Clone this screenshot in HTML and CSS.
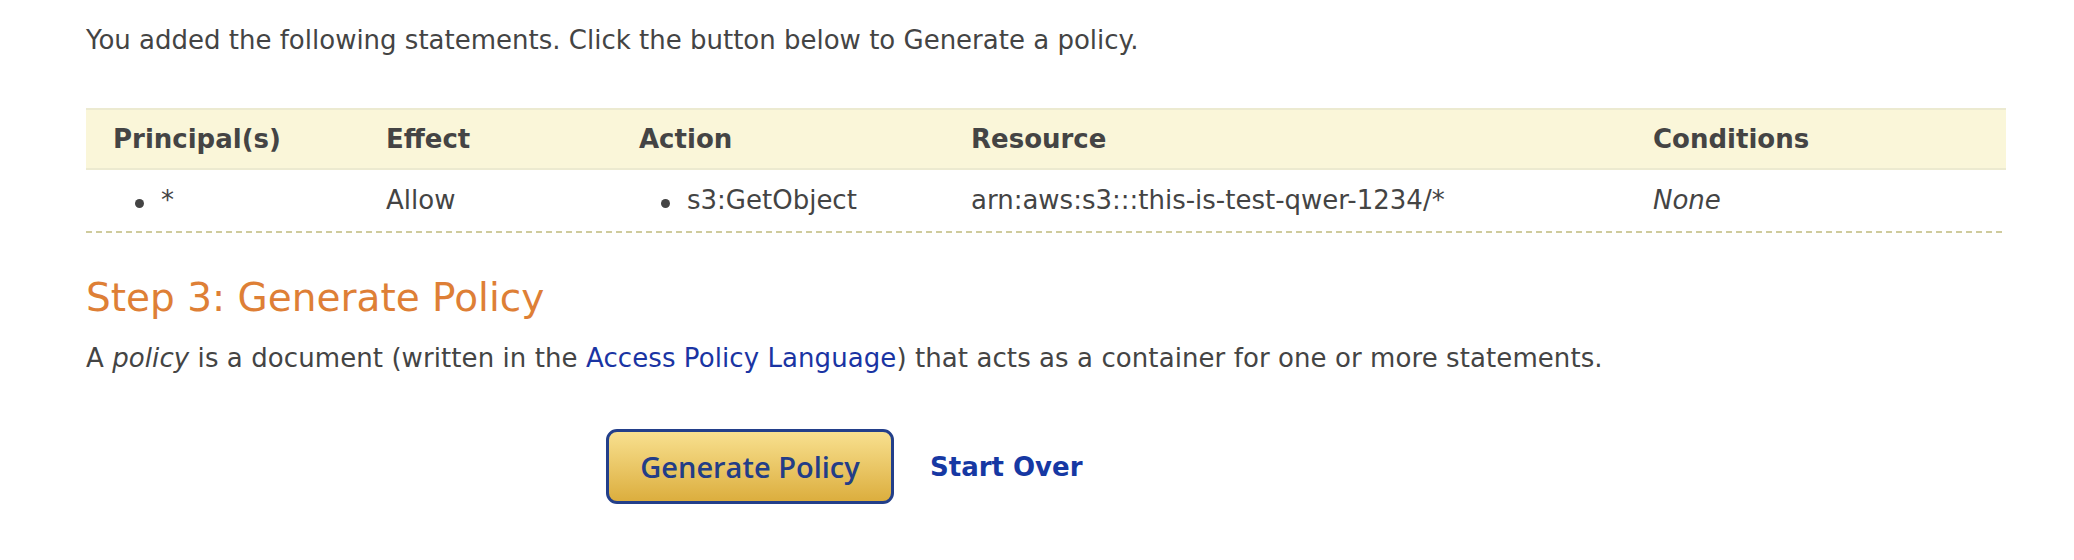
FILE: index.html
```html
<!DOCTYPE html>
<html>
<head>
<meta charset="utf-8">
<link rel="stylesheet" href="styles.css">
</head>
<body>
<div class="page">
  <p class="intro">You added the following statements. Click the button below to Generate a policy.</p>
  <table class="stmts">
    <colgroup>
      <col class="c1"><col class="c2"><col class="c3"><col class="c4"><col class="c5">
    </colgroup>
    <thead>
      <tr><th>Principal(s)</th><th>Effect</th><th>Action</th><th>Resource</th><th>Conditions</th></tr>
    </thead>
    <tbody>
      <tr>
        <td><ul class="blist"><li>*</li></ul></td>
        <td>Allow</td>
        <td><ul class="blist"><li>s3:GetObject</li></ul></td>
        <td>arn:aws:s3:::this-is-test-qwer-1234/*</td>
        <td><em>None</em></td>
      </tr>
    </tbody>
  </table>
  <div class="dash"></div>
  <h2 class="step">Step 3: Generate Policy</h2>
  <p class="desc">A <em>policy</em> is a document (written in the <a href="#">Access Policy Language</a>) that acts as a container for one or more statements.</p>
  <div class="actions">
    <button class="gen">Generate Policy</button>
    <a href="#" class="over">Start Over</a>
  </div>
</div>
</body>
</html>
```
FILE: styles.css
```css
html, body { margin: 0; padding: 0; background: #fff; }
body {
  font-family: "DejaVu Sans", Verdana, sans-serif;
  font-size: 26px;
  line-height: 30px;
  color: #444;
}
.page { padding: 25px 68px 0 86px; }
.intro { margin: 0 0 53px 0; }
.stmts {
  width: 1920px;
  border-collapse: collapse;
  table-layout: fixed;
}
.c1 { width: 273px; }
.c2 { width: 253px; }
.c3 { width: 332px; }
.c4 { width: 682px; }
.c5 { width: 380px; }
.stmts th {
  background: #faf6d9;
  border-top: 2px solid #ecead0;
  border-bottom: 2px solid #ecead0;
  text-align: left;
  font-weight: bold;
  padding: 14px 0 14px 27px;
  color: #444;
}
.stmts td {
  padding: 15px 0 16px 27px;
  vertical-align: top;
  white-space: nowrap;
}
.blist { list-style: none; margin: 0; padding: 0; }
.blist li { display: flex; align-items: center; }
.blist li::before {
  content: "";
  width: 9px; height: 9px;
  border-radius: 50%;
  background: #444;
  margin: 6px 17px 0 22px;
}
.dash {
  width: 1920px;
  height: 2px;
  background: repeating-linear-gradient(90deg, #cfcb9d 0 6px, transparent 6px 10px);
}
.step {
  margin: 42px 0 0 0;
  font-size: 39px;
  line-height: 45px;
  font-weight: normal;
  color: #de7f36;
}
.desc { margin: 23px 0 0 0; letter-spacing: 0.08px; }
.desc a { color: #1a34a3; text-decoration: none; }
.actions {
  display: flex;
  align-items: center;
  margin: 56px 0 0 520px;
}
.gen {
  width: 288px;
  height: 75px;
  border: 3px solid #233f8a;
  border-radius: 11px;
  background: linear-gradient(#f8e08f, #dcae3e);
  color: #233d87;
  font-family: "Open Sans", "Noto Sans", sans-serif;
  font-weight: 600;
  font-size: 29px;
  padding: 0;
}
.over {
  margin-left: 36px;
  color: #1638a3;
  font-weight: bold;
  text-decoration: none;
  font-size: 26px;
}
```
